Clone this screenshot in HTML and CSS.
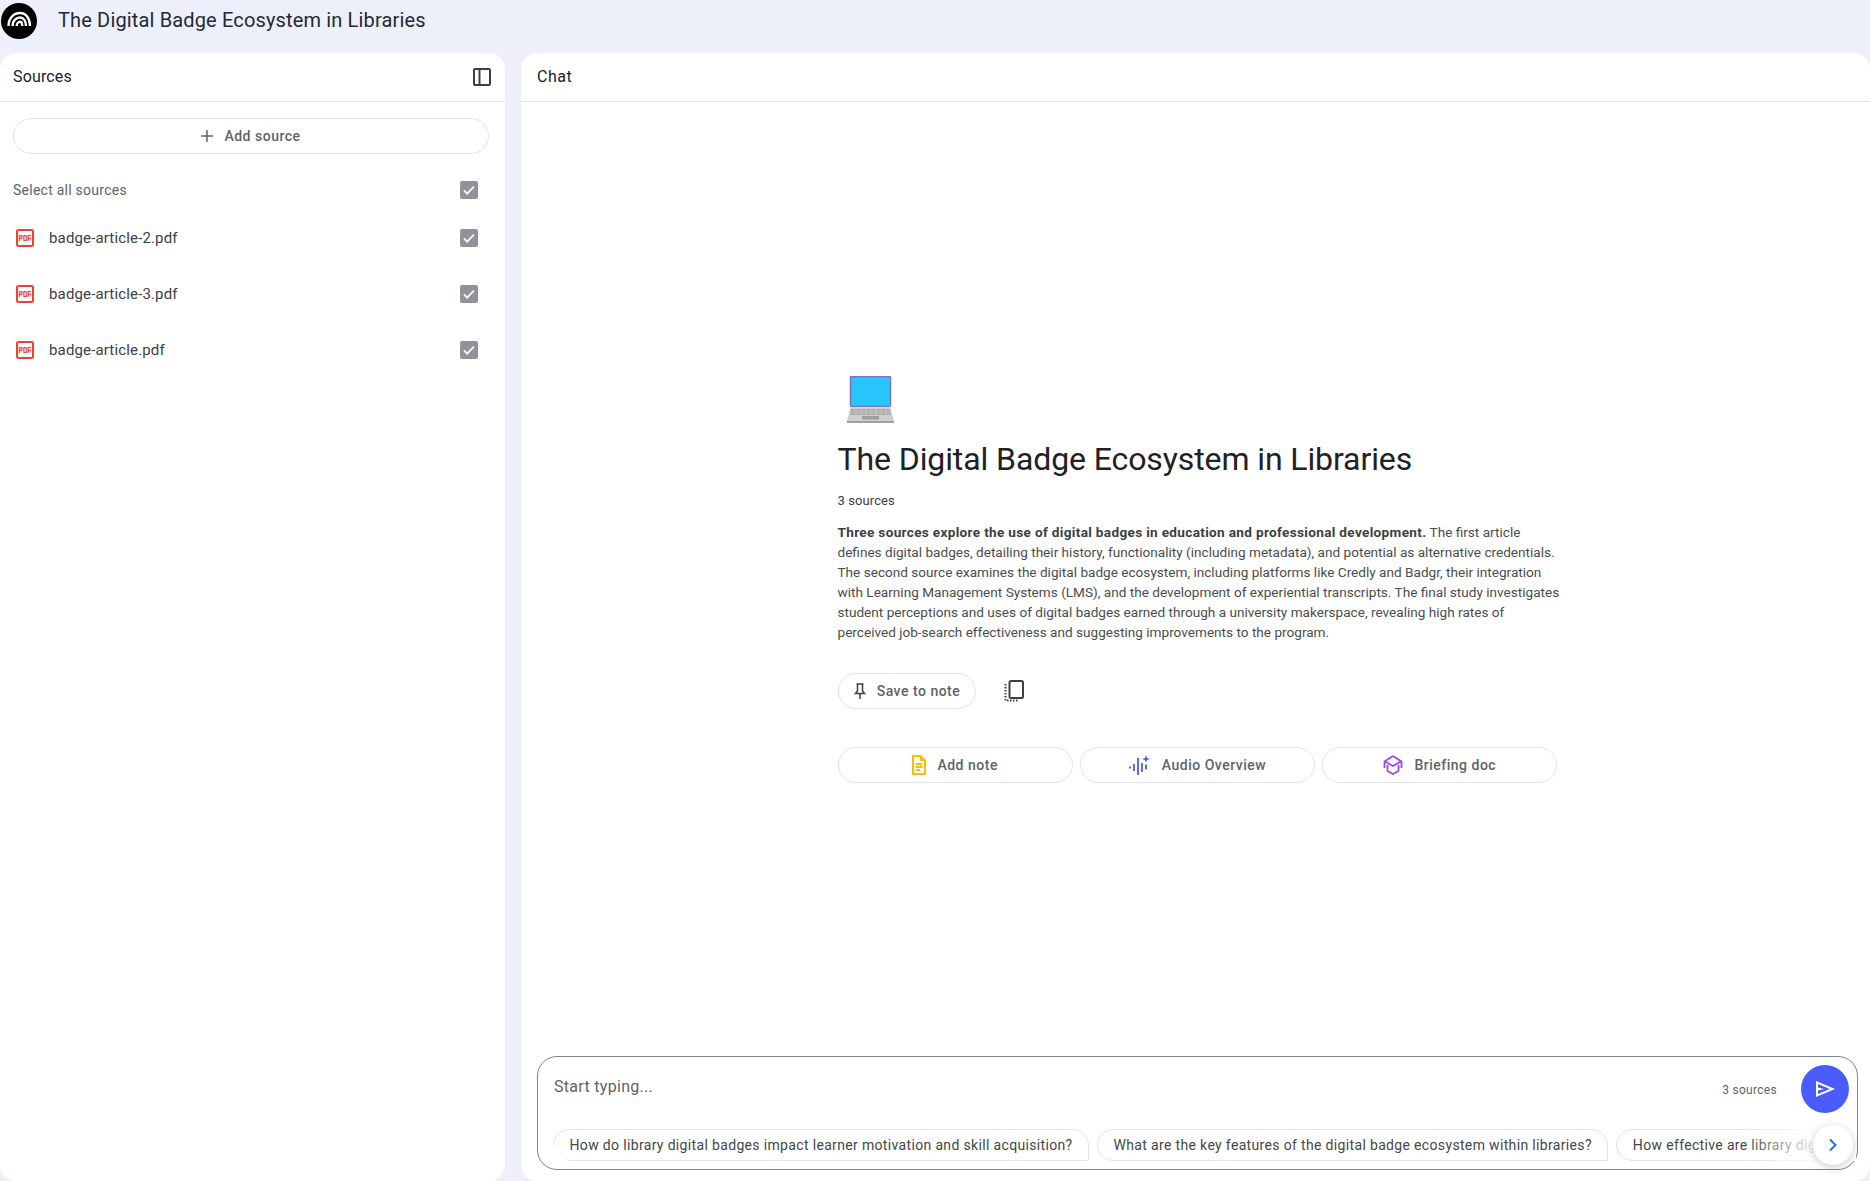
FILE: index.html
```html
<!DOCTYPE html>
<html lang="en">
<head>
<meta charset="utf-8">
<title>The Digital Badge Ecosystem in Libraries</title>
<link rel="stylesheet" href="styles.css">
</head>
<body>
<div class="app">
  <header class="topbar">
    <span class="logo">
      <svg viewBox="0 0 36 36" width="36" height="36"><circle cx="18" cy="18" r="18" fill="#000"/><g fill="none" stroke="#fff" stroke-width="2.400"><path d="M7.500 23C7.500 15.500 12.500 10 19 10C25 10 29 15.500 29 23"/><path d="M11.500 23C11.500 18 15 14.500 19 14.500C22.500 14.500 25 18 25 23"/><path d="M15.700 23C15.700 20.500 17.500 18.800 19 18.800C20.500 18.800 21.200 20.500 21.200 23"/></g></svg>
    </span>
    <h1 class="topbar-title">The Digital Badge Ecosystem in Libraries</h1>
  </header>
  <main class="panels">
    <section class="panel sources">
      <div class="panel-head">
        <span>Sources</span>
        <svg class="collapse-icon" viewBox="0 0 18 18" width="18" height="18"><rect x="1" y="1" width="16" height="16" rx="1" fill="none" stroke="#3c4043" stroke-width="2"/><path d="M6.500 1v16" stroke="#3c4043" stroke-width="2"/></svg>
      </div>
      <div class="sources-body">
        <button class="add-source">
          <svg viewBox="0 0 12 12" width="12" height="12"><path d="M6 0v12M0 6h12" stroke="#5f6368" stroke-width="1.500"/></svg>
          <span>Add source</span>
        </button>
        <div class="select-row">
          <span class="select-label">Select all sources</span>
          <span class="check"><svg viewBox="0 0 18 18" width="18" height="18"><path d="M4 9.500l3.200 3.200L14 5.500" fill="none" stroke="#fff" stroke-width="1.800"/></svg></span>
        </div>
        <ul class="source-list">
          <li class="source">
            <svg class="pdf" viewBox="0 0 18 18" width="18" height="18"><rect x="1" y="1" width="16" height="16" rx="1.500" fill="#fff" stroke="#ea4335" stroke-width="2"/><text transform="translate(2.600 12.200) scale(.72 1)" class="pdf-text">PDF</text></svg>
            <span class="source-name">badge-article-2.pdf</span>
            <span class="check"><svg viewBox="0 0 18 18" width="18" height="18"><path d="M4 9.500l3.200 3.200L14 5.500" fill="none" stroke="#fff" stroke-width="1.800"/></svg></span>
          </li>
          <li class="source">
            <svg class="pdf" viewBox="0 0 18 18" width="18" height="18"><rect x="1" y="1" width="16" height="16" rx="1.500" fill="#fff" stroke="#ea4335" stroke-width="2"/><text transform="translate(2.600 12.200) scale(.72 1)" class="pdf-text">PDF</text></svg>
            <span class="source-name">badge-article-3.pdf</span>
            <span class="check"><svg viewBox="0 0 18 18" width="18" height="18"><path d="M4 9.500l3.200 3.200L14 5.500" fill="none" stroke="#fff" stroke-width="1.800"/></svg></span>
          </li>
          <li class="source">
            <svg class="pdf" viewBox="0 0 18 18" width="18" height="18"><rect x="1" y="1" width="16" height="16" rx="1.500" fill="#fff" stroke="#ea4335" stroke-width="2"/><text transform="translate(2.600 12.200) scale(.72 1)" class="pdf-text">PDF</text></svg>
            <span class="source-name">badge-article.pdf</span>
            <span class="check"><svg viewBox="0 0 18 18" width="18" height="18"><path d="M4 9.500l3.200 3.200L14 5.500" fill="none" stroke="#fff" stroke-width="1.800"/></svg></span>
          </li>
        </ul>
      </div>
    </section>
    <section class="panel chat">
      <div class="panel-head chat-head"><span>Chat</span></div>
      <div class="chat-body">
        <article class="overview">
          <svg class="laptop" viewBox="0 0 48 48" width="48" height="48">
            <rect x="3.500" y="0.500" width="40" height="30" rx="1" fill="#29c5ff" stroke="#7e72c4" stroke-width="1.500"/>
            <path d="M3.500 31.500h40L47 45H0z" fill="#cfcfcf"/>
            <path d="M4 33h39l.8 6H3z" fill="#a9a9a9"/>
            <path d="M4 35h39M3.500 37h40M9 33v6M14 33v6M19 33v6M24 33v6M29 33v6M34 33v6M39 33v6" stroke="#d4d4d4" stroke-width=".6"/>
            <rect x="15" y="40" width="17" height="3.500" fill="#9e9e9e"/>
            <rect y="45" width="47" height="2" fill="#a0a0a0"/>
          </svg>
          <h2 class="overview-title">The Digital Badge Ecosystem in Libraries</h2>
          <p class="overview-count">3 sources</p>
          <p class="overview-text"><strong>Three sources explore the use of digital badges in education and professional development.</strong> The first article defines digital badges, detailing their history, functionality (including metadata), and potential as alternative credentials. The second source examines the digital badge ecosystem, including platforms like Credly and Badgr, their integration with Learning Management Systems (LMS), and the development of experiential transcripts. The final study investigates student perceptions and uses of digital badges earned through a university makerspace, revealing high rates of perceived job-search effectiveness and suggesting improvements to the program.</p>
          <div class="note-row">
            <button class="pill save">
              <svg viewBox="0 0 14 18" width="14" height="18"><path d="M3.500 2h7M4.500 2v7L2.500 11.500h9L9.500 9V2M7 11.500V17" fill="none" stroke="#3c4043" stroke-width="1.500"/></svg>
              <span>Save to note</span>
            </button>
            <svg class="copy" viewBox="0 0 20 22" width="20" height="22"><rect x="5.500" y="1" width="13.500" height="17" rx="1.500" fill="none" stroke="#3c4043" stroke-width="2"/><path d="M1.500 4v16.500H14" fill="none" stroke="#3c4043" stroke-width="2" stroke-dasharray="1.500 1.500"/></svg>
          </div>
          <div class="actions">
            <button class="pill action">
              <svg viewBox="0 0 14 20" width="14" height="20"><path d="M1 1h7.500L13 5.500V19H1z" fill="none" stroke="#fbbc04" stroke-width="2"/><path d="M8 1v5h5z" fill="#fbbc04"/><path d="M3.500 9h7M3.500 12h7M3.500 15h4.500" stroke="#fbbc04" stroke-width="1.800"/></svg>
              <span>Add note</span>
            </button>
            <button class="pill action">
              <svg viewBox="0 0 22 20" width="22" height="20"><path d="M1 11.500v2M5 9v7M9 3v17M13 8v9M17 9.500v5" stroke="#4a5cfb" stroke-width="1.800" fill="none"/><path d="M17 0l1 3 3 1-3 1-1 3-1-3-3-1 3-1z" fill="#4a5cfb"/></svg>
              <span>Audio Overview</span>
            </button>
            <button class="pill action">
              <svg viewBox="0 0 20 20" width="20" height="20"><path d="M10 1l8.500 5.500v6.500M10 1L1.500 6.500v6.500" fill="none" stroke="#a142f4" stroke-width="1.800"/><path d="M2 6.500l8 4.500 8-4.500" fill="none" stroke="#a142f4" stroke-width="1.800"/><path d="M4.500 10v6L10 19l5.500-3v-6" fill="none" stroke="#a142f4" stroke-width="1.800"/></svg>
              <span>Briefing doc</span>
            </button>
          </div>
        </article>
      </div>
      <div class="composer">
        <div class="composer-top">
          <span class="placeholder">Start typing...</span>
          <span class="composer-count">3 sources</span>
          <button class="send"><svg viewBox="0 0 24 24" width="24" height="24"><path d="M3 20V4l19 8zm2-3 11.850-5L5 7v3.500l6 1.500-6 1.500z" fill="#fff"/></svg></button>
        </div>
        <div class="chips">
          <span class="chip">How do library digital badges impact learner motivation and skill acquisition?</span>
          <span class="chip">What are the key features of the digital badge ecosystem within libraries?</span>
          <span class="chip chip-last">How effective are library digital</span>
        </div>
        <span class="chips-fade"></span>
        <button class="next"><svg viewBox="0 0 10 14" width="10" height="14"><path d="M2 1.500L7.500 7 2 12.500" fill="none" stroke="#1a73e8" stroke-width="2"/></svg></button>
      </div>
    </section>
  </main>
</div>
</body>
</html>
```
FILE: styles.css
```css
* { box-sizing: border-box; }
html, body { margin: 0; height: 100%; }
body { background: #edeffa; font-family: Roboto, "Liberation Sans", sans-serif; color: #1f1f1f; overflow: hidden; }
button { font: inherit; cursor: pointer; }
.app { height: 1181px; display: flex; flex-direction: column; }
.topbar { height: 53px; flex: none; display: flex; align-items: center; padding: 0 0 13px 1px; gap: 21px; }
.logo { width: 36px; height: 36px; display: block; margin-top: 2px; }
.logo svg { display: block; }
.topbar-title { margin: 0; font-size: 20px; font-weight: 400; color: #1f2937; line-height: 24px; letter-spacing: .15px; }
.panels { flex: 1; display: flex; gap: 16px; min-height: 0; }
.panel { background: #fff; border-radius: 16px; display: flex; flex-direction: column; min-height: 0; }
.sources { width: 505px; flex: none; }
.chat { flex: 1; min-width: 0; }
.panel-head { height: 49px; flex: none; display: flex; align-items: center; justify-content: space-between; padding: 0 14px 0 13px; border-bottom: 1px solid #e0e3ea; font-size: 16px; line-height: 24px; color: #202124; letter-spacing: .15px; }
.chat-head { padding-left: 16px; letter-spacing: .5px; }
.sources-body { padding: 16px 16px 0 13px; }
.add-source { width: 476px; height: 36px; display: flex; align-items: center; justify-content: center; gap: 11px; background: #fff; border: 1px solid #e0e3ee; border-radius: 18px; font-size: 14px; font-weight: 500; color: #5f6368; padding: 0; letter-spacing: .5px; }
.select-row { display: flex; align-items: center; justify-content: space-between; padding-right: 11px; margin-top: 26px; height: 20px; }
.select-label { font-size: 14px; color: #5f6368; letter-spacing: .25px; }
.check { width: 18px; height: 18px; background: #909399; border-radius: 2px; display: block; flex: none; }
.check svg { display: block; }
.source-list { list-style: none; margin: 28px 0 0; padding: 0 11px 0 3px; display: flex; flex-direction: column; gap: 36px; }
.source { height: 20px; display: flex; align-items: center; }
.pdf { flex: none; }
.pdf-text { font-family: "Liberation Sans", sans-serif; font-size: 9px; font-weight: 700; fill: #ea4335; stroke: #ea4335; stroke-width: .25px; }
.source-name { flex: 1; margin-left: 15px; font-size: 15px; color: #3c4043; letter-spacing: .15px; }
.chat-body { flex: 1; min-height: 0; display: flex; align-items: center; justify-content: center; padding-left: 4px; }
.overview { width: 720px; }
.laptop { display: block; margin-left: 9px; }
.overview-title { margin: 15px 0 0; font-size: 32px; font-weight: 400; line-height: 40px; color: #202124; letter-spacing: -.1px; }
.overview-count { margin: 12px 0 0; font-size: 13px; line-height: 20px; color: #3c4043; letter-spacing: .1px; }
.overview-text { margin: 11px -4px 0 0; font-size: 13.600px; line-height: 20px; color: #4a4d4c; }
.overview-text strong { letter-spacing: .32px; color: #3c4043; }
.note-row { display: flex; align-items: center; gap: 28px; margin-top: 31px; }
.pill { display: flex; align-items: center; justify-content: center; height: 36px; background: #fff; border: 1px solid #e0e3ee; border-radius: 18px; font-size: 14px; font-weight: 500; color: #5f6368; padding: 0; letter-spacing: .5px; }
.save { width: 138px; gap: 10px; }
.copy { display: block; }
.actions { display: flex; gap: 7px; margin-top: 38px; }
.action { flex: 1; gap: 11px; }
.composer { position: relative; flex: none; margin: 0 12px 11px 16px; height: 114px; border: 1px solid #80868b; border-radius: 20px; padding: 8px 8px 0 7px; }
.composer-top { display: flex; align-items: center; height: 48px; }
.placeholder { flex: 1; margin-left: 9px; margin-top: -6px; font-size: 16px; color: #5f6368; letter-spacing: .3px; }
.composer-count { font-size: 12px; color: #5f6368; margin-right: 24px; margin-top: 2px; letter-spacing: .3px; }
.send { width: 48px; height: 48px; border: 0; border-radius: 50%; background: #4a5cfb; display: flex; align-items: center; justify-content: center; padding: 0; }
.chips { display: flex; gap: 8px; margin: 16px 0 0 8px; overflow: hidden; border-radius: 0 0 20px 20px; }
.chip { flex: none; height: 32px; line-height: 30px; padding: 0 15.500px; border: 1px solid #e0e3ee; border-radius: 16px 16px 2px 16px; font-size: 14px; color: #444746; white-space: nowrap; letter-spacing: .34px; }
.chip-last { width: 240px; }
.chips-fade { position: absolute; right: 1px; bottom: 8px; width: 112px; height: 32px; background: linear-gradient(to right, rgba(255,255,255,0), #fff 70%); }
.next { position: absolute; right: 4px; bottom: 4px; width: 40px; height: 40px; border: 0; border-radius: 50%; background: #fff; box-shadow: 0 2px 8px rgba(60,64,67,.28); display: flex; align-items: center; justify-content: center; padding: 0; }
```
